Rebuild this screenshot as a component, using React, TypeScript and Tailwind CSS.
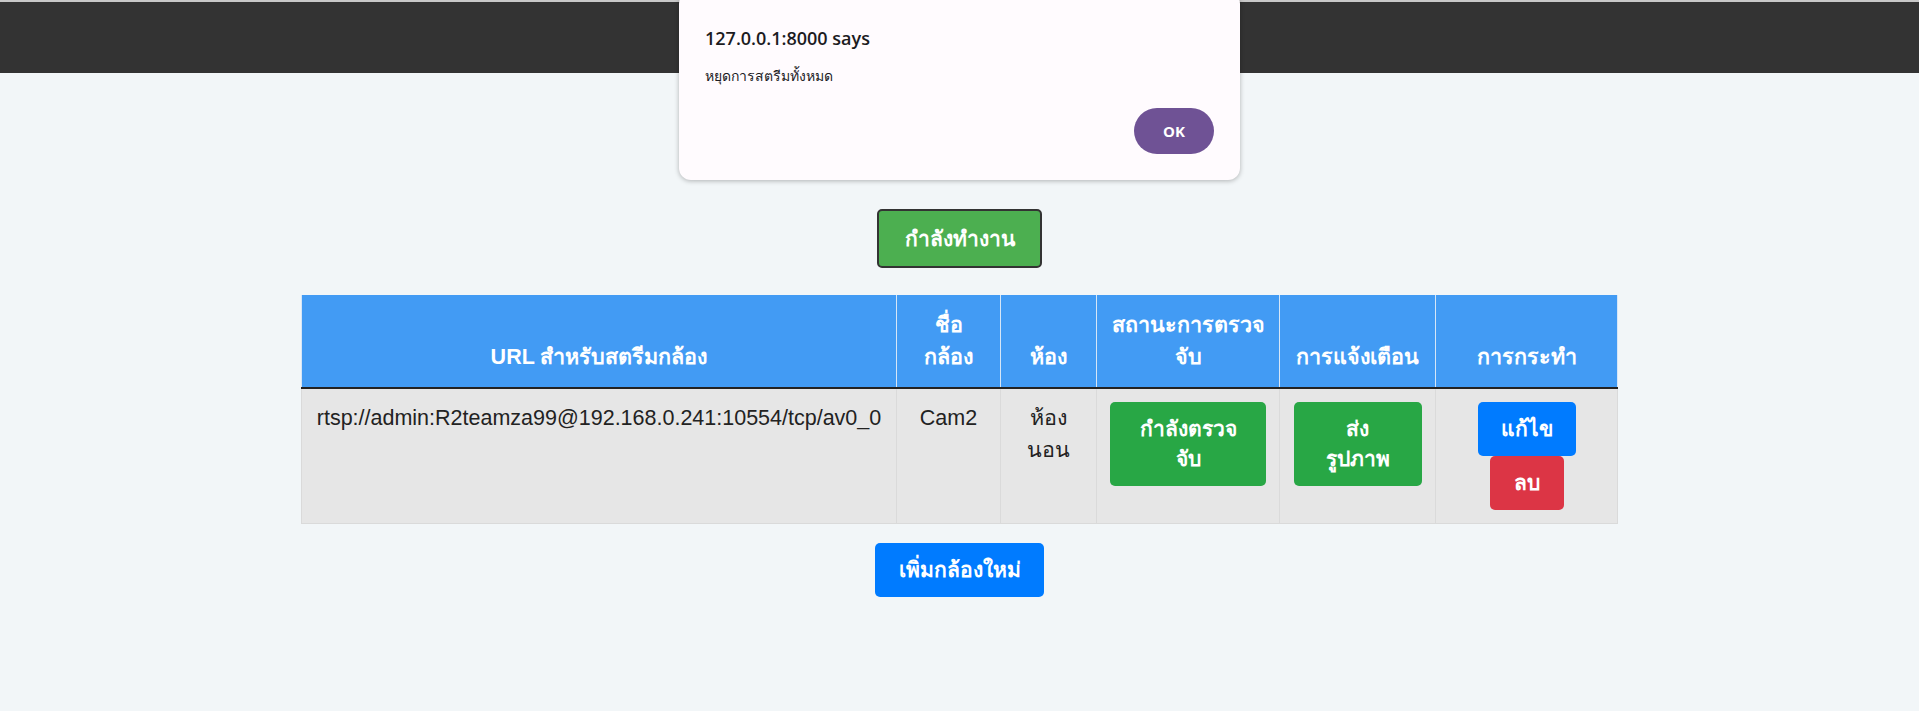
export default function App() {
  const th =
    "bg-[#429bf4] text-white font-bold text-center align-bottom px-[12px] pt-[14px] pb-[14px] text-[21.5px] leading-[32px] border-x border-[#d6e6f7] border-b-2 border-b-[#222222]";
  const td =
    "bg-[#e6e6e6] align-top text-center px-[12px] py-[13px] text-[21.5px] leading-[32px] border border-[#dadada] text-[#222222]";
  const btn = "rounded-[5px] text-white font-bold text-[21px] leading-[30px]";
  return (
    <div className="relative min-h-[711px] bg-[#f2f6f8] font-['Liberation_Sans',Arial,sans-serif] text-[20px] overflow-hidden">
      <div className="h-[2px] bg-[#c8c8c8]" />
      <div className="h-[71px] bg-[#333333]" />

      <div className="flex flex-col items-center pt-[136px]">
        <button className={`${btn} w-[165px] h-[59px] border-2 border-[#333333] bg-[#4caf50]`}>
          กำลังทำงาน
        </button>

        <table className="mt-[27px] w-[1316px] table-fixed border-collapse">
          <thead>
            <tr>
              <th className={`${th} w-[595px]`}>URL สำหรับสตรีมกล้อง</th>
              <th className={`${th} w-[104px]`}>
                ชื่อ
                <br />
                กล้อง
              </th>
              <th className={`${th} w-[96px]`}>ห้อง</th>
              <th className={`${th} w-[183px]`}>
                สถานะการตรวจ
                <br />
                จับ
              </th>
              <th className={`${th} w-[156px] whitespace-nowrap`}>การแจ้งเตือน</th>
              <th className={`${th} w-[182px]`}>การกระทำ</th>
            </tr>
          </thead>
          <tbody>
            <tr>
              <td className={`${td} whitespace-nowrap`}>
                rtsp://admin:R2teamza99@192.168.0.241:10554/tcp/av0_0
              </td>
              <td className={td}>Cam2</td>
              <td className={td}>
                ห้อง
                <br />
                นอน
              </td>
              <td className={td}>
                <div className="flex justify-center">
                  <button className={`${btn} w-[156px] h-[84px] bg-[#28a745]`}>
                    กำลังตรวจ
                    <br />
                    จับ
                  </button>
                </div>
              </td>
              <td className={td}>
                <div className="flex justify-center">
                  <button className={`${btn} w-[128px] h-[84px] bg-[#28a745]`}>
                    ส่ง
                    <br />
                    รูปภาพ
                  </button>
                </div>
              </td>
              <td className={td}>
                <div className="flex flex-col items-center">
                  <button className={`${btn} w-[98px] h-[54px] bg-[#007bff]`}>แก้ไข</button>
                  <button className={`${btn} w-[74px] h-[54px] bg-[#dc3545]`}>ลบ</button>
                </div>
              </td>
            </tr>
          </tbody>
        </table>

        <button className={`${btn} mt-[19px] w-[169px] h-[54px] bg-[#007bff]`}>
          เพิ่มกล้องใหม่
        </button>
      </div>

      <div className="absolute left-[679px] top-[-8px] w-[561px] h-[188px] rounded-[12px] bg-[#fffbfe] shadow-[0_1px_5px_rgba(0,0,0,0.28)] flex flex-col px-[26px] pt-[34px] pb-[26px] font-['Open_Sans',sans-serif] text-[#1c1b1f]">
        <div className="text-[18px] leading-[24px] font-semibold">127.0.0.1:8000 says</div>
        <div className="mt-[16px] text-[14px] leading-[20px]">หยุดการสตรีมทั้งหมด</div>
        <div className="mt-auto flex justify-end">
          <button className="w-[80px] h-[46px] rounded-full bg-[#6f5295] text-white text-[15px] font-bold">
            OK
          </button>
        </div>
      </div>
    </div>
  );
}
